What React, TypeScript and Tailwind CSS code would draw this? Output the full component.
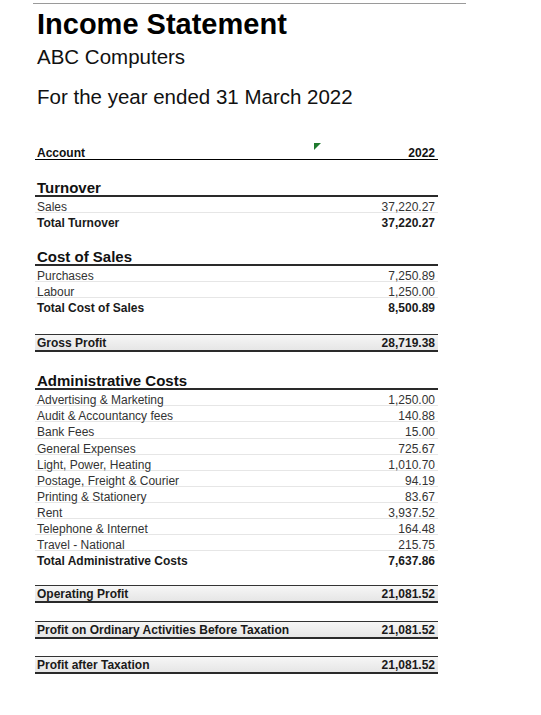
type Row = { label: string; value: string };

const sections: { title: string; rows: Row[]; total: Row }[] = [
  {
    title: 'Turnover',
    rows: [{ label: 'Sales', value: '37,220.27' }],
    total: { label: 'Total Turnover', value: '37,220.27' },
  },
  {
    title: 'Cost of Sales',
    rows: [
      { label: 'Purchases', value: '7,250.89' },
      { label: 'Labour', value: '1,250.00' },
    ],
    total: { label: 'Total Cost of Sales', value: '8,500.89' },
  },
];

const adminRows: Row[] = [
  { label: 'Advertising & Marketing', value: '1,250.00' },
  { label: 'Audit & Accountancy fees', value: '140.88' },
  { label: 'Bank Fees', value: '15.00' },
  { label: 'General Expenses', value: '725.67' },
  { label: 'Light, Power, Heating', value: '1,010.70' },
  { label: 'Postage, Freight & Courier', value: '94.19' },
  { label: 'Printing & Stationery', value: '83.67' },
  { label: 'Rent', value: '3,937.52' },
  { label: 'Telephone & Internet', value: '164.48' },
  { label: 'Travel - National', value: '215.75' },
];

const SectionTitle = ({ title, gap = 'mt-[19px]' }: { title: string; gap?: string }) => (
  <div className={`${gap} h-[18px] border-b-2 border-[#2a2a2a] pl-[2px] pt-[1px] text-[15px] font-bold leading-[16px] text-[#111]`}>
    {title}
  </div>
);

const LineRow = ({ row }: { row: Row }) => (
  <div className="flex h-[16.1px] items-start justify-between border-b border-[#e6e6e6] pl-[2px] pr-[3px] pt-[3px] text-[12px] leading-[14px] text-[#333]">
    <span>{row.label}</span>
    <span>{row.value}</span>
  </div>
);

const TotalRow = ({ row }: { row: Row }) => (
  <div className="flex h-4 items-start justify-between pl-[2px] pr-[3px] pt-[3px] text-[12px] font-bold leading-[14px] text-[#1a1a1a]">
    <span>{row.label}</span>
    <span>{row.value}</span>
  </div>
);

const SummaryRow = ({ row, gap = 'mt-[18px]' }: { row: Row; gap?: string }) => (
  <div className={`${gap} flex h-[18px] items-start justify-between border-t border-b-2 border-t-[#333] border-b-[#2a2a2a] bg-gradient-to-b from-[#f6f6f6] to-[#e6e6e6] pl-[2px] pr-[3px] pt-[2px] text-[12px] font-bold leading-[13px] text-[#1a1a1a]`}>
    <span>{row.label}</span>
    <span>{row.value}</span>
  </div>
);

export default function App() {
  return (
    <div className="min-h-[715px] w-[541px] bg-white font-['Liberation_Sans',Arial,sans-serif]">
      <div className="ml-[33px] w-[433px] pt-[3px]">
        <div className="h-px bg-[#9a9a9a]" />
      </div>

      <div className="pl-[37px]">
        <h1 className="mt-[5px] text-[29px] font-bold leading-[30px] text-black">Income Statement</h1>
        <p className="mt-[6px] text-[20.5px] leading-[24px] text-[#111]">ABC Computers</p>
        <p className="mt-[16px] text-[20.5px] leading-[24px] text-[#111]">For the year ended 31 March 2022</p>
      </div>

      <div className="ml-[35px] mt-[35px] w-[403px]">
        <div className="relative flex h-[16px] items-start justify-between border-b border-black pl-[2px] pr-[3px] pt-[2px] text-[12px] font-bold leading-[14px] text-[#111]">
          <span>Account</span>
          <svg className="absolute left-[279px] top-[-1px]" width="7" height="7" viewBox="0 0 7 7">
            <polygon points="0,0 7,0 0,7" fill="#1f7a2e" />
          </svg>
          <span>2022</span>
        </div>

        {sections.map((s) => (
          <div key={s.title}>
            <SectionTitle title={s.title} />
            {s.rows.map((r) => (
              <LineRow key={r.label} row={r} />
            ))}
            <TotalRow row={s.total} />
          </div>
        ))}

        <SummaryRow row={{ label: 'Gross Profit', value: '28,719.38' }} gap="mt-[20px]" />

        <SectionTitle title="Administrative Costs" gap="mt-[20px]" />
        {adminRows.map((r) => (
          <LineRow key={r.label} row={r} />
        ))}
        <TotalRow row={{ label: 'Total Administrative Costs', value: '7,637.86' }} />

        <SummaryRow row={{ label: 'Operating Profit', value: '21,081.52' }} />
        <SummaryRow row={{ label: 'Profit on Ordinary Activities Before Taxation', value: '21,081.52' }} />
        <SummaryRow row={{ label: 'Profit after Taxation', value: '21,081.52' }} gap="mt-[17px]" />
      </div>
    </div>
  );
}
